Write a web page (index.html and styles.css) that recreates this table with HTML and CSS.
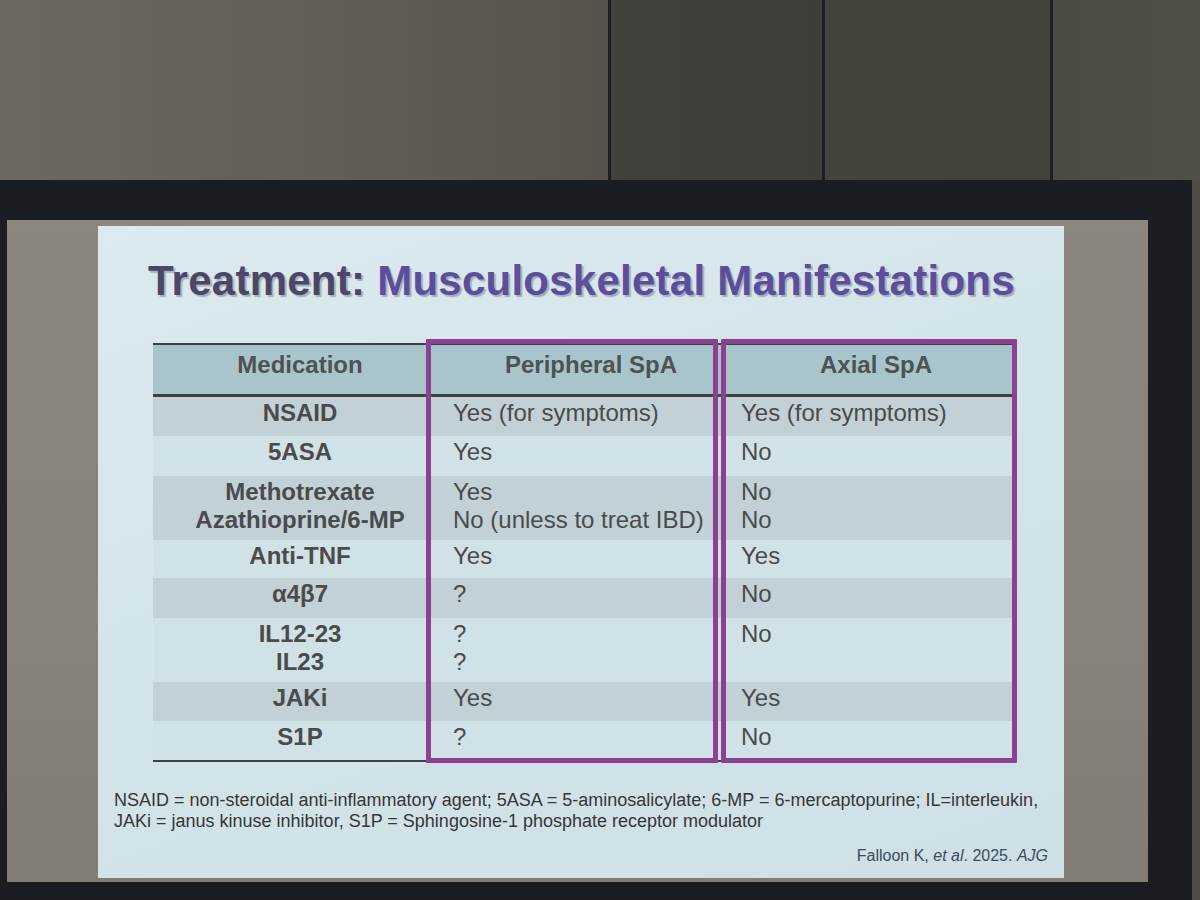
FILE: index.html
```html
<!DOCTYPE html>
<html lang="en">
<head>
<meta charset="utf-8">
<title>Treatment: Musculoskeletal Manifestations</title>
<link rel="stylesheet" href="styles.css">
</head>
<body>
<div class="page">
  <div class="wall">
    <div class="panel p1"></div><div class="seam"></div>
    <div class="panel p2"></div><div class="seam"></div>
    <div class="panel p3"></div><div class="seam"></div>
    <div class="panel p4"></div>
  </div>
  <div class="lower">
    <div class="frame">
      <div class="screen">
        <div class="slide">
          <h1 class="title"><span class="t-dark">Treatment:</span> <span class="t-purple">Musculoskeletal Manifestations</span></h1>
          <div class="table">
            <div class="rule rule-top"></div>
            <div class="row hdr">
              <div class="cell c1">Medication</div>
              <div class="cell c2">Peripheral SpA</div>
              <div class="cell gap"></div>
              <div class="cell c3">Axial SpA</div>
            </div>
            <div class="rule rule-mid"></div>
            <div class="row dark h39">
              <div class="cell c1">NSAID</div>
              <div class="cell c2">Yes (for symptoms)</div>
              <div class="cell gap"></div>
              <div class="cell c3">Yes (for symptoms)</div>
            </div>
            <div class="row light h40">
              <div class="cell c1">5ASA</div>
              <div class="cell c2">Yes</div>
              <div class="cell gap"></div>
              <div class="cell c3">No</div>
            </div>
            <div class="row dark h64">
              <div class="cell c1">Methotrexate<br>Azathioprine/6-MP</div>
              <div class="cell c2">Yes<br>No (unless to treat IBD)</div>
              <div class="cell gap"></div>
              <div class="cell c3">No<br>No</div>
            </div>
            <div class="row light h38">
              <div class="cell c1">Anti-TNF</div>
              <div class="cell c2">Yes</div>
              <div class="cell gap"></div>
              <div class="cell c3">Yes</div>
            </div>
            <div class="row dark h40">
              <div class="cell c1">α4β7</div>
              <div class="cell c2">?</div>
              <div class="cell gap"></div>
              <div class="cell c3">No</div>
            </div>
            <div class="row light h64">
              <div class="cell c1">IL12-23<br>IL23</div>
              <div class="cell c2">?<br>?</div>
              <div class="cell gap"></div>
              <div class="cell c3">No</div>
            </div>
            <div class="row dark h39">
              <div class="cell c1">JAKi</div>
              <div class="cell c2">Yes</div>
              <div class="cell gap"></div>
              <div class="cell c3">Yes</div>
            </div>
            <div class="row light h39">
              <div class="cell c1">S1P</div>
              <div class="cell c2">?</div>
              <div class="cell gap"></div>
              <div class="cell c3">No</div>
            </div>
            <div class="rule rule-bottom"></div>
            <div class="box box1"></div>
            <div class="box box2"></div>
          </div>
          <p class="footnote">NSAID = non-steroidal anti-inflammatory agent; 5ASA = 5-aminosalicylate; 6-MP = 6-mercaptopurine; IL=interleukin,<br>JAKi = janus kinuse inhibitor, S1P = Sphingosine-1 phosphate receptor modulator</p>
          <p class="cite">Falloon K, <em>et al</em>. 2025. <em>AJG</em></p>
        </div>
      </div>
    </div>
    <div class="wall-strip"></div>
  </div>
</div>
</body>
</html>
```

FILE: styles.css
```css
* { box-sizing: border-box; }
html, body { margin: 0; padding: 0; }
body {
  width: 1200px;
  height: 900px;
  overflow: hidden;
  background: #4d4943;
  font-family: "Liberation Sans", Arial, sans-serif;
}
.page { width: 1200px; height: 900px; display: flex; flex-direction: column; }

/* wall */
.wall { height: 180px; display: flex; }
.panel { height: 100%; }
.p1 { width: 608px; background: linear-gradient(90deg, #6d6860 0%, #625d56 55%, #57534c 100%); }
.p2 { width: 211px; background: linear-gradient(90deg, #44413c, #403d38); }
.p3 { width: 225px; background: linear-gradient(90deg, #46433d, #44413b); }
.p4 { flex: 1; background: linear-gradient(90deg, #4d4a44, #524e48); }
.seam { width: 3px; background: #1d1e21; }

/* projection frame */
.lower { height: 720px; display: flex; }
.frame {
  width: 1192px;
  background: #1a1d22;
  padding: 40px 44px 18px 7px;
}
.wall-strip { flex: 1; background: #4f4b45; }
.screen {
  height: 100%;
  background: linear-gradient(180deg, #8b867e 0%, #87827a 60%, #817c74 100%);
  padding: 6px 0 0 91px;
}

/* slide */
.slide {
  width: 966px;
  height: 652px;
  background: linear-gradient(160deg, #dbeaee 0%, #d4e5e9 45%, #cee0e5 100%);
  padding-top: 31px;
  display: flex;
  flex-direction: column;
}
.title {
  margin: 0 0 0 50px;
  font-size: 42px;
  line-height: 48px;
  font-weight: bold;
  letter-spacing: 0.25px;
  white-space: nowrap;
  text-shadow: 2px 2px 1px rgba(70, 70, 90, 0.35);
}
.t-dark { color: #4b4766; }
.t-purple { color: #5b4e9e; }

/* table */
.table {
  position: relative;
  width: 864px;
  margin: 38px 0 0 55px;
  color: #4a4b4c;
  font-size: 24px;
}
.rule { background: #3c4347; }
.rule-top { height: 2px; }
.rule-mid { height: 3px; }
.rule-bottom { height: 2px; }
.row {
  display: grid;
  grid-template-columns: 273px 292px 3px 296px;
}
.cell { line-height: 28px; padding-top: 2px; white-space: nowrap; }
.c1 { text-align: center; padding-left: 21px; font-weight: bold; }
.c2 { padding-left: 27px; }
.c3 { padding-left: 20px; }
.hdr { height: 49px; background: #a8c5cb; }
.hdr .cell { font-weight: bold; padding-top: 6px; color: #4d5255; }
.hdr .c2 { text-align: center; padding-left: 38px; }
.hdr .c3 { text-align: center; padding-left: 14px; }
.dark { background: #c1d1d5; }
.light { background: #d0e2e6; }
.h38 { height: 38px; }
.h39 { height: 39px; }
.h40 { height: 40px; }
.h64 { height: 64px; }

.box {
  position: absolute;
  top: -4px;
  bottom: -1px;
  border: 5px solid #8b4190;
  border-radius: 1px;
}
.box1 { left: 273px; width: 292px; }
.box2 { left: 568px; width: 296px; }

/* notes */
.footnote {
  margin: 28px 0 0 16px;
  font-size: 18px;
  line-height: 20.5px;
  color: #353637;
  white-space: nowrap;
}
.cite {
  margin: 16px 16px 0 0;
  align-self: flex-end;
  font-size: 16px;
  line-height: 18px;
  color: #3c4a5e;
}
.cite em { font-style: italic; }
```
